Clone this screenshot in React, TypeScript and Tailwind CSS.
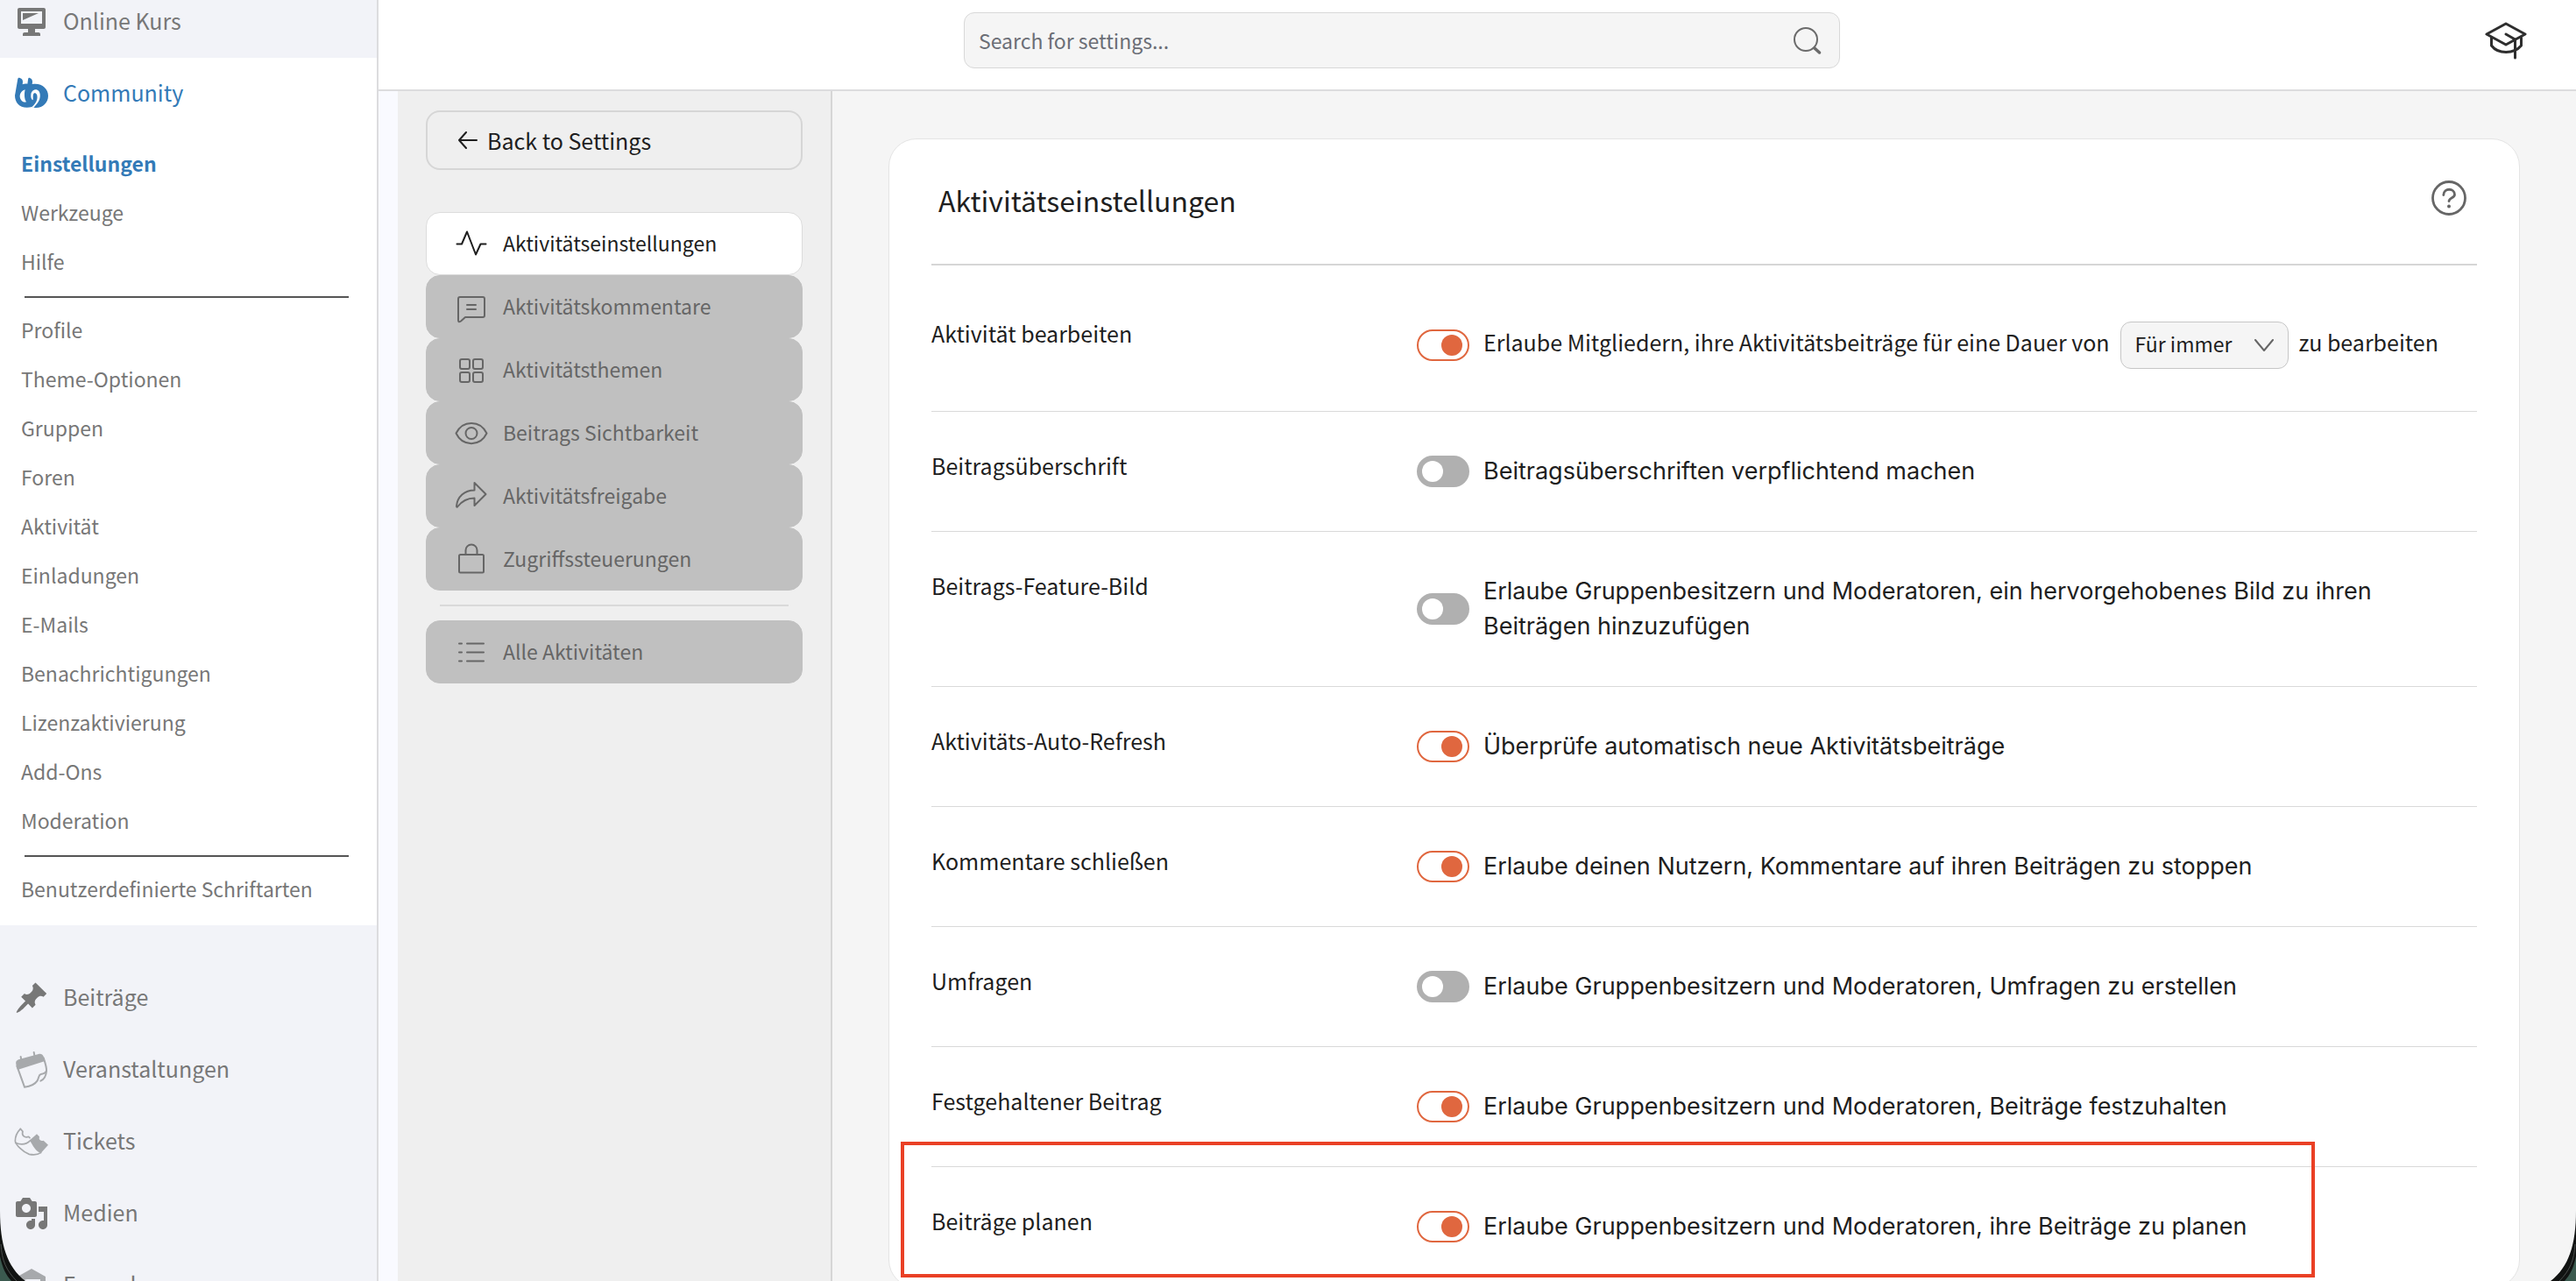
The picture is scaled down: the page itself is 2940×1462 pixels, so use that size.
import { useState, type ReactNode } from 'react'

interface IconProps {
  children: ReactNode
  className?: string
}

interface Setting {
  id: string
  label: string
  text: string
  enabled: boolean
}

// 20 unit grid, drawn at 40px
function MenuIcon({ children, className = '' }: IconProps) {
  return (
    <svg viewBox="0 0 20 20" className={`w-10 h-10 shrink-0 fill-current ${className}`} aria-hidden="true">
      {children}
    </svg>
  )
}

function TabIcon({ children }: IconProps) {
  return (
    <svg
      viewBox="0 0 40 40"
      className="w-10 h-10 shrink-0 fill-none stroke-current stroke-2"
      strokeLinecap="round"
      strokeLinejoin="round"
      aria-hidden="true"
    >
      {children}
    </svg>
  )
}

const DesktopIcon = (
  <MenuIcon>
    <path d="M3 2h14c.55 0 1 .45 1 1v10c0 .55-.45 1-1 1h-5v2h2c.55 0 1 .45 1 1v1H5v-1c0-.55.45-1 1-1h2v-2H3c-.55 0-1-.45-1-1V3c0-.55.45-1 1-1zm13 9V4H4v7h12zM5 5h9L5 9V5z" />
  </MenuIcon>
)

const CommunityIcon = (
  <svg viewBox="0 0 120 120" className="w-10 h-10 shrink-0" aria-hidden="true">
    <path
      d="M12 14C13 5 16 5 20 6C28 8 30 13 30 20L29 28C36 25 41 25 46 26L48 12C49 5 51 5 54 6C61 8 63 13 63 20L62 27C92 21 117 40 117 67C117 91 99 108 76 108C70 108 66 107 62 105C24 115 3 93 3 66Z"
      fill="currentColor"
    />
    <g fill="#ffffff">
      <path d="M38 46C22 50 15 68 24 81C29 88 36 90 42 88C36 80 34 62 38 46Z" />
      <path d="M58 62C60 47 76 40 85 51C93 63 89 82 80 92L67 108L61 105C76 93 83 76 78 62C73 55 65 58 65 68V82C59 80 57 72 58 62Z" />
    </g>
    <path d="M71 62V76" stroke="currentColor" strokeWidth="8" strokeLinecap="round" fill="none" />
  </svg>
)

const PinIcon = (
  <MenuIcon>
    <path d="M10.44 3.02l1.82-1.82 6.36 6.35-1.83 1.82c-1.05-.68-2.48-.57-3.41.36l-.75.75c-.92.93-1.04 2.35-.35 3.41l-1.83 1.82-2.41-2.41-2.8 2.79c-.42.42-3.38 2.71-3.8 2.29s1.86-3.39 2.28-3.81l2.79-2.79L4.1 9.36l1.83-1.82c1.05.69 2.48.57 3.4-.36l.75-.75c.93-.92 1.05-2.35.36-3.41z" />
  </MenuIcon>
)

const MediaIcon = (
  <MenuIcon>
    <path d="M13 11V4c0-.55-.45-1-1-1h-1.67L9 1H5L3.67 3H2c-.55 0-1 .45-1 1v7c0 .55.45 1 1 1h10c.55 0 1-.45 1-1zM7 4.5c1.38 0 2.5 1.12 2.5 2.5S8.38 9.5 7 9.5 4.5 8.38 4.5 7 5.62 4.5 7 4.5zM14 6h5v10.5c0 1.38-1.12 2.5-2.5 2.5S14 17.88 14 16.5s1.12-2.5 2.5-2.5c.17 0 .34.02.5.05V9h-3V6zm-4 8.05V13h2v3.5c0 1.38-1.12 2.5-2.5 2.5S7 17.88 7 16.5 8.12 14 9.5 14c.17 0 .34.02.5.05z" />
  </MenuIcon>
)

const EventsIcon = (
  <svg viewBox="0 0 120 126" className="w-10 h-[42px] shrink-0 fill-none stroke-current text-[#a7a9ac]" strokeWidth="6" strokeLinecap="round" aria-hidden="true">
    <path d="M7 44C5 36 8 31 15 28L84 9C92 7 98 10 101 17L106 33L12 63Z" fill="currentColor" stroke="none" />
    <path d="M23 18L25 30M68 3L70 14" />
    <path d="M10 50L36 122C52 120 72 112 80 100C86 88 84 80 92 78C104 76 110 72 111 66C112 54 107 40 101 22" />
    <path d="M111 66C110 86 102 96 91 101" />
  </svg>
)

const TicketIcon = (
  <svg viewBox="0 0 120 96" className="w-10 h-8 shrink-0 fill-none stroke-current text-[#a7a9ac]" strokeWidth="5" strokeLinecap="round" strokeLinejoin="round" aria-hidden="true">
    <path d="M22 4C10 16 4 30 4 46C6 58 30 84 52 91C68 94 84 91 92 86" />
    <path d="M22 4L30 13C25 26 36 36 50 31L54 35" />
    <path d="M5 52C24 60 42 58 56 44" />
    <path d="M54 43L78 22L87 31C84 41 90 47 101 44L117 59L92 87C76 84 64 62 54 43Z" fill="currentColor" stroke="none" />
  </svg>
)

const FormsIcon = (
  <svg viewBox="0 0 40 40" className="w-10 h-10 shrink-0 fill-current text-[#a7a9ac]" aria-hidden="true">
    <path fillRule="evenodd" d="M20 1L36 10V30L20 39L4 30V10ZM15 13C12 13 10 15 10 18V27H30V21H16V23H27V25H13V18C13 17 14 16 15 16H30V13Z" />
  </svg>
)

const toolLinks = ['Einstellungen', 'Werkzeuge', 'Hilfe']

const componentLinks = [
  'Profile',
  'Theme-Optionen',
  'Gruppen',
  'Foren',
  'Aktivität',
  'Einladungen',
  'E-Mails',
  'Benachrichtigungen',
  'Lizenzaktivierung',
  'Add-Ons',
  'Moderation',
]

const contentLinks = [
  { label: 'Beiträge', icon: PinIcon },
  { label: 'Veranstaltungen', icon: EventsIcon },
  { label: 'Tickets', icon: TicketIcon },
  { label: 'Medien', icon: MediaIcon },
  { label: 'Formulare', icon: FormsIcon },
]

const tabs = [
  {
    label: 'Aktivitätseinstellungen',
    icon: <path d="M3.500 20.500H9L15 6.500L25 32.500L30.500 20.500H36.500" />,
  },
  {
    label: 'Aktivitätskommentare',
    icon: (
      <>
        <path d="M7 9H33A2 2 0 0 1 35 11V30A2 2 0 0 1 33 32H13L8 36.500Q5 38.500 5 35.500V11A2 2 0 0 1 7 9Z" />
        <path d="M15 18H25M15 23H25" />
      </>
    ),
  },
  {
    label: 'Aktivitätsthemen',
    icon: (
      <>
        <rect x="7" y="8" width="11" height="11" rx="2" />
        <rect x="22" y="8" width="11" height="11" rx="2" />
        <rect x="7" y="23" width="11" height="11" rx="2" />
        <rect x="22" y="23" width="11" height="11" rx="2" />
      </>
    ),
  },
  {
    label: 'Beitrags Sichtbarkeit',
    icon: (
      <>
        <path d="M2.500 20.500C10 5 30 5 37.500 20.500C30 36 10 36 2.500 20.500Z" />
        <circle cx="20" cy="20.500" r="6.500" />
      </>
    ),
  },
  {
    label: 'Aktivitätsfreigabe',
    icon: <path d="M23.500 5L36.500 18L23.500 31V22.500C15 22.500 9 26 4 32.500Q3 33 3 31.500C4 21 12 13.500 23.500 13.500Z" />,
  },
  {
    label: 'Zugriffssteuerungen',
    icon: (
      <>
        <rect x="6" y="15" width="28" height="20.500" rx="1.500" />
        <path d="M13.500 15V10A6.500 6.500 0 0 1 26.500 10V15" />
      </>
    ),
  },
]

const settings: Setting[] = [
  { id: 'title', label: 'Beitragsüberschrift', text: 'Beitragsüberschriften verpflichtend machen', enabled: false },
  { id: 'image', label: 'Beitrags-Feature-Bild', text: 'Erlaube Gruppenbesitzern und Moderatoren, ein hervorgehobenes Bild zu ihren Beiträgen hinzuzufügen', enabled: false },
  { id: 'refresh', label: 'Aktivitäts-Auto-Refresh', text: 'Überprüfe automatisch neue Aktivitätsbeiträge', enabled: true },
  { id: 'close', label: 'Kommentare schließen', text: 'Erlaube deinen Nutzern, Kommentare auf ihren Beiträgen zu stoppen', enabled: true },
  { id: 'polls', label: 'Umfragen', text: 'Erlaube Gruppenbesitzern und Moderatoren, Umfragen zu erstellen', enabled: false },
  { id: 'pinned', label: 'Festgehaltener Beitrag', text: 'Erlaube Gruppenbesitzern und Moderatoren, Beiträge festzuhalten', enabled: true },
  { id: 'schedule', label: 'Beiträge planen', text: 'Erlaube Gruppenbesitzern und Moderatoren, ihre Beiträge zu planen', enabled: true },
]

function Toggle({ id, defaultChecked }: { id: string; defaultChecked: boolean }) {
  const [checked, setChecked] = useState(defaultChecked)

  return (
    <input
      id={id}
      type="checkbox"
      checked={checked}
      onChange={() => setChecked(!checked)}
      className="appearance-none w-[60px] h-9 shrink-0 rounded-full border-2 border-[#b0b0b0] bg-[#b0b0b0] pl-1 pr-1.5 flex items-center cursor-pointer before:block before:w-6 before:h-6 before:rounded-full before:bg-white checked:bg-white checked:border-[#e0673f] checked:justify-end checked:before:bg-[#e0673f]"
    />
  )
}

function MainLink({ label, icon, className }: { label: string; icon: ReactNode; className: string }) {
  return (
    <a href="#" className={`flex items-center gap-4 pl-4 text-[25px] leading-9 ${className}`}>
      {icon}
      <span className="pb-1">{label}</span>
    </a>
  )
}

function SubLink({ label, active = false }: { label: string; active?: boolean }) {
  return (
    <a
      href="#"
      className={`flex items-center h-14 px-6 pb-1 text-[23px] leading-8 ${active ? 'font-bold text-[#337ab7]' : 'text-[#777777]'}`}
    >
      {label}
    </a>
  )
}

function Sidebar() {
  return (
    <nav className="w-[432px] shrink-0 border-r-2 border-[#dcdcde] bg-[#f2f3f8] text-[#777777]">
      <MainLink label="Online Kurs" icon={DesktopIcon} className="h-[66px] pb-4" />

      <div className="bg-white pb-3">
        <MainLink label="Community" icon={CommunityIcon} className="h-[82px] mb-3 text-[#337ab7]" />
        {toolLinks.map((label, index) => (
          <SubLink key={label} label={label} active={index === 0} />
        ))}
        <hr className="my-[10px] ml-7 mr-8 border-t-2 border-[#555555]" />
        {componentLinks.map((label) => (
          <SubLink key={label} label={label} />
        ))}
        <hr className="my-[10px] ml-7 mr-8 border-t-2 border-[#555555]" />
        <SubLink label="Benutzerdefinierte Schriftarten" />
      </div>

      <div className="pt-[42px]">
        {contentLinks.map((item) => (
          <MainLink key={item.label} label={item.label} icon={item.icon} className="h-[82px]" />
        ))}
      </div>
    </nav>
  )
}

function Header() {
  return (
    <header className="flex items-center h-[104px] pb-[10px] border-b-2 border-[#dcdcde] bg-white">
      <div className="flex-1 flex justify-center">
        <label className="flex items-center w-[1000px] h-16 pl-4 pr-5 rounded-xl border border-[#d8d8d8] bg-[#f5f5f5]">
          <input
            type="text"
            aria-label="Search for settings"
            placeholder="Search for settings..."
            className="flex-1 bg-transparent outline-none text-[23px] leading-8 placeholder:text-[#6b6e76]"
          />
          <svg viewBox="0 0 32 32" className="w-8 h-8 fill-none stroke-[#6b6b6b]" strokeLinecap="round" aria-hidden="true">
            <circle cx="14" cy="15" r="13" strokeWidth="2" />
            <path d="M24 25L29.500 30" strokeWidth="3.500" />
          </svg>
        </label>
      </div>
      <button type="button" aria-label="Dokumentation" className="flex justify-end w-[172px] pr-14">
        <svg viewBox="0 0 48 44" className="w-12 h-11 fill-none stroke-[#2e2e2e]" strokeWidth="3" strokeLinecap="round" strokeLinejoin="round">
          <path d="M24 3L46 15L24 27L2 15Z" />
          <path d="M7.500 19V28C15 38 33 38 41.500 28V19" />
          <path d="M24 15L34.500 21V42" />
        </svg>
      </button>
    </header>
  )
}

function SettingsTabs() {
  return (
    <aside className="w-[496px] shrink-0 border-r-2 border-[#d6d6d6] bg-[#efefef] px-8 pt-[22px]">
      <button type="button" className="flex items-center gap-[10px] w-full h-[68px] pl-[34px] mb-12 rounded-2xl border-2 border-[#d6d6d6] text-[25px] leading-9 text-[#1e1e1e]">
        <svg viewBox="0 0 24 20" className="w-6 h-5 fill-none stroke-current" strokeWidth="2" strokeLinecap="round" strokeLinejoin="round" aria-hidden="true">
          <path d="M22 10H2M10 1L2 10L10 19" />
        </svg>
        Back to Settings
      </button>

      <div className="text-[23px] leading-8">
        {tabs.map((tab, index) => (
          <a
            key={tab.label}
            href="#"
            className={`flex items-center gap-4 h-[72px] pl-[31px] rounded-2xl border ${
              index === 0 ? 'border-[#dcdcdc] bg-white text-[#1e1e1e]' : 'border-[#c0c0c0] bg-[#c0c0c0] text-[#666666]'
            }`}
          >
            <TabIcon>{tab.icon}</TabIcon>
            <span className="pb-0.5">{tab.label}</span>
          </a>
        ))}
        <hr className="my-4 mx-4 border-t-2 border-[#d9d9d9]" />
        <a href="#" className="flex items-center gap-4 h-[72px] pl-[31px] rounded-2xl border border-[#c0c0c0] bg-[#c0c0c0] text-[#666666]">
          <TabIcon>
            <path d="M6 10.500H9M15 10.500H34M6 20.500H9M15 20.500H34M6 30.500H9M15 30.500H34" />
          </TabIcon>
          <span className="pb-0.5">Alle Aktivitäten</span>
        </a>
      </div>
    </aside>
  )
}

function SettingRow({ setting, highlighted }: { setting: Setting; highlighted: boolean }) {
  return (
    <div className="relative grid grid-cols-[554px_1fr] py-12 border-b border-[#d9d9d9]">
      <div className="text-[25px] leading-[26px]">{setting.label}</div>
      <div className="flex items-center gap-4">
        <Toggle id={setting.id} defaultChecked={setting.enabled} />
        <label htmlFor={setting.id} className="font-['Inter',sans-serif] text-[27px] leading-10">
          {setting.text}
        </label>
      </div>
      {highlighted && (
        <div className="absolute -top-[29px] -left-[35px] right-[185px] h-[155px] border-4 border-[#ea4025] pointer-events-none"></div>
      )}
    </div>
  )
}

function SettingsCard() {
  return (
    <section className="flex-1 mx-16 mt-[54px] h-max px-12 rounded-[32px] border border-[#e4e4e4] bg-white text-[#1e1e1e]">
      <div className="flex items-center justify-between h-[144px] pb-2 pl-2 pr-3 border-b-2 border-[#d6d6d6]">
        <h1 className="pt-1 text-[32px] leading-10">Aktivitätseinstellungen</h1>
        <button type="button" aria-label="Hilfe">
          <svg viewBox="0 0 40 40" className="w-10 h-10 fill-none stroke-[#666666]" strokeWidth="2.800" strokeLinecap="round">
            <circle cx="20" cy="20" r="18.500" />
            <path d="M13.800 16.500C14 8 26.500 8.500 26.500 16C26.500 20 20.500 19.500 20 23.500" />
            <circle cx="20" cy="29.500" r="2" fill="#666666" stroke="none" />
          </svg>
        </button>
      </div>

      {/* Edit window */}
      <div className="grid grid-cols-[554px_1fr] pt-16 pb-12 border-b border-[#d9d9d9]">
        <div className="text-[25px] leading-[26px]">Aktivität bearbeiten</div>
        <div className="flex items-center gap-3">
          <div className="flex items-center gap-4">
            <Toggle id="edit" defaultChecked />
            <label htmlFor="edit" className="pb-2 text-[25px] leading-8">
              Erlaube Mitgliedern, ihre Aktivitätsbeiträge für eine Dauer von
            </label>
          </div>
          <div className="relative">
            <select
              aria-label="Dauer"
              className="appearance-none block w-48 h-[54px] pl-4 pb-1 rounded-xl border border-[#c6c6c6] bg-[#f5f5f5] text-[23px] leading-8"
            >
              <option>Für immer</option>
            </select>
            <svg viewBox="0 0 24 14" className="absolute right-4 top-5 w-6 h-3.5 fill-none stroke-[#666666] pointer-events-none" strokeWidth="2" strokeLinecap="round" strokeLinejoin="round" aria-hidden="true">
              <path d="M2 1L12 13L22 1" />
            </svg>
          </div>
          <span className="pb-2 text-[25px] leading-8">zu bearbeiten</span>
        </div>
      </div>

      {settings.map((setting) => (
        <SettingRow key={setting.id} setting={setting} highlighted={setting.id === 'schedule'} />
      ))}
    </section>
  )
}

// Rounded lower edge of the window
function WindowCorner({ className }: { className: string }) {
  return (
    <svg viewBox="0 0 30 80" className={`absolute bottom-0 w-[30px] h-20 pointer-events-none ${className}`} aria-hidden="true">
      <path d="M0 0C0 38 8 64 29 80H0Z" fill="#111312" />
      <path d="M1 38C2 56 7 68 19 80" fill="none" stroke="#4a4e4c" strokeWidth="1" />
      <path d="M0 52C3 66 7 73 13 80H0Z" fill="#3b5a4f" />
    </svg>
  )
}

export default function App() {
  return (
    <div className="relative flex h-screen overflow-hidden bg-[#f5f5f5] font-['Noto_Sans_CJK_SC',sans-serif]">
      <Sidebar />
      <div className="flex-1 min-w-0 flex flex-col">
        <Header />
        <main className="flex-1 min-h-0 flex border-l-[22px] border-[#f9faff]">
          <SettingsTabs />
          <SettingsCard />
        </main>
      </div>
      <WindowCorner className="left-0" />
      <WindowCorner className="right-0 -scale-x-100" />
    </div>
  )
}
